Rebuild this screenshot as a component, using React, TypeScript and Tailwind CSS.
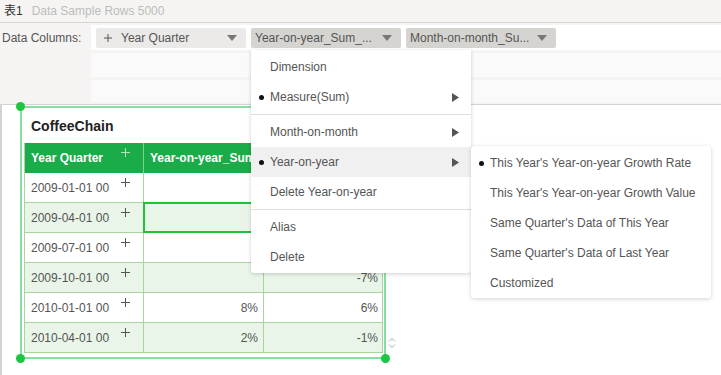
import React from "react";

const FONT = { fontFamily: '"Liberation Sans", Arial, "Noto Sans CJK SC", sans-serif' };

type Row = { date: string; yoy: string; mom: string };

// rows 2-3 of the month-on-month column sit under the open menu
const rows: Row[] = [
    { date: "2009-01-01 00", yoy: "", mom: "" },
    { date: "2009-04-01 00", yoy: "", mom: "" },
    { date: "2009-07-01 00", yoy: "", mom: "" },
    { date: "2009-10-01 00", yoy: "", mom: "-7%" },
    { date: "2010-01-01 00", yoy: "8%", mom: "6%" },
    { date: "2010-04-01 00", yoy: "2%", mom: "-1%" },
];

function Plus({ color = "#555" }: { color?: string }) {
    return (
        <svg width="9" height="9" viewBox="0 0 9 9" fill="none">
            <path d="M4.5 0V9M0 4.5H9" stroke={color} strokeWidth="1" />
        </svg>
    );
}

function Caret() {
    return (
        <svg width="10" height="6" viewBox="0 0 10 6">
            <path d="M0 0H10L5 6Z" fill="#777" />
        </svg>
    );
}

function Arrow() {
    return (
        <svg width="7" height="9" viewBox="0 0 7 9">
            <path d="M0 0L7 4.5L0 9Z" fill="#555" />
        </svg>
    );
}

function Chip({ label, dark, plus }: { label: string; dark?: boolean; plus?: boolean }) {
    return (
        <div
            className={`flex h-[20px] w-[150px] items-center justify-between rounded-[2px] pr-[9px] ${
                dark ? "bg-[#d6d4d0] pl-[4px]" : "bg-[#ebeae8] pl-[8px]"
            }`}
        >
            <div className="flex items-center gap-[9px] text-[#555]">
                {plus && (
                    <svg width="8" height="8" viewBox="0 0 8 8" fill="none">
                        <path d="M4 0V8M0 4H8" stroke="#555" strokeWidth="1" />
                    </svg>
                )}
                <span>{label}</span>
            </div>
            <Caret />
        </div>
    );
}

function MenuItem({ label, bullet, sub, active }: { label: string; bullet?: boolean; sub?: boolean; active?: boolean }) {
    return (
        <div className={`relative flex h-[30px] items-center justify-between pl-[19px] pr-[12px] ${active ? "bg-[#f0f0f0]" : ""}`}>
            {bullet && <span className="absolute left-[8px] top-[13px] h-[5px] w-[5px] rounded-full bg-[#111]" />}
            <span>{label}</span>
            {sub && <Arrow />}
        </div>
    );
}

function Divider() {
    return <div className="my-[2px] h-px bg-[#dedede]" />;
}

export default function App() {
    return (
        <div className="relative h-[375px] w-[721px] overflow-hidden bg-white text-[12px] text-[#555]" style={FONT}>
            {/* sheet bar */}
            <div className="flex h-[23px] items-center gap-[9px] border-b border-[#d6d4d1] bg-[#f5f4f2] pl-[4px]">
                <span className="text-[#333]">表1</span>
                <span className="text-[#bcbcbc]">Data Sample Rows 5000</span>
            </div>

            {/* binding panel */}
            <div className="flex h-[82px] border-b border-[#d6d4d1] bg-[#f5f4f2]">
                <div className="w-[91px] pl-[2px] pt-[2px]">
                    <div className="flex h-[25px] items-center">Data Columns:</div>
                </div>
                <div className="flex flex-1 flex-col pt-[2px]">
                    <div className="flex h-[25px] items-center gap-[5px] bg-white pl-[5px]">
                        <Chip label="Year Quarter" plus />
                        <Chip label="Year-on-year_Sum_..." dark />
                        <Chip label="Month-on-month_Su..." dark />
                    </div>
                    <div className="mt-[3px] h-[24px] bg-[#fafafa]" />
                    <div className="mt-[3px] h-[22px] bg-[#fafafa]" />
                </div>
            </div>

            {/* canvas */}
            <div className="h-[270px] border-l-2 border-[#d4d2ce] pl-[18px] pt-[1px]">
                <div className="relative h-[253px] w-[366px] border-2 border-[#86dfa0]">
                    <span className="absolute -left-[6px] -top-[6px] h-[9px] w-[9px] rounded-full bg-[#1ec542]" />
                    <span className="absolute -bottom-[6px] -left-[6px] h-[9px] w-[9px] rounded-full bg-[#1ec542]" />
                    <span className="absolute -bottom-[6px] -right-[6px] h-[9px] w-[9px] rounded-full bg-[#1ec542]" />

                    <div className="flex h-[35px] items-center pl-[9px] pt-[1px] text-[14px] font-bold text-[#222]">CoffeeChain</div>

                    <div className="ml-[2px] w-[359px] border-l border-[#a9d49f]">
                        <div className="flex h-[30px] bg-[#1aac48] font-bold text-white">
                            <div className="relative flex w-[119px] items-center border-r border-[#7fd08f] pl-[6px]">
                                Year Quarter
                                <span className="absolute left-[96px] top-[5px]">
                                    <Plus color="#b9e2c2" />
                                </span>
                            </div>
                            <div className="flex w-[108px] items-center overflow-hidden whitespace-nowrap pl-[6px]">
                                Year-on-year_Sum
                            </div>
                            <div className="w-[12px] border-r border-[#7fd08f]" />
                            <div className="w-[119px] border-r border-[#7fd08f]" />
                        </div>
                        {rows.map((r, i) => (
                            <div key={r.date} className={`flex h-[30px] ${i % 2 === 1 ? "bg-[#e9f5e8]" : "bg-white"}`}>
                                <div className="relative flex w-[119px] items-center border-b border-r border-[#a9d49f] pl-[6px]">
                                    {r.date}
                                    <span className="absolute left-[96px] top-[5px]">
                                        <Plus />
                                    </span>
                                </div>
                                <div className="relative flex w-[120px] items-center justify-end border-b border-r border-[#a9d49f] pr-[5px]">
                                    {r.yoy}
                                    {i === 1 && <span className="absolute -left-px -top-px h-[31px] w-[121px] border-2 border-[#1fc23a]" />}
                                </div>
                                <div className="flex w-[119px] items-center justify-end border-b border-r border-[#a9d49f] pr-[4px]">
                                    {r.mom}
                                </div>
                            </div>
                        ))}
                    </div>

                    <svg className="absolute -right-[12px] top-[229px]" width="8" height="12" viewBox="0 0 8 12" fill="none">
                        <path d="M1 4.5L4 1.5L7 4.5M1 7.5L4 10.5L7 7.5" stroke="#aaa" strokeWidth="1" />
                    </svg>
                </div>
            </div>

            {/* context menu */}
            <div className="absolute left-[251px] top-[50px] h-[223px] w-[220px] rounded-b-[3px] bg-white pt-[2px] shadow-[0_1px_4px_rgba(0,0,0,0.18)]">
                <MenuItem label="Dimension" />
                <MenuItem label="Measure(Sum)" bullet sub />
                <Divider />
                <MenuItem label="Month-on-month" sub />
                <MenuItem label="Year-on-year" bullet sub active />
                <MenuItem label="Delete Year-on-year" />
                <Divider />
                <MenuItem label="Alias" />
                <MenuItem label="Delete" />
            </div>

            {/* submenu */}
            <div className="absolute left-[471px] top-[146px] h-[152px] w-[240px] rounded-[3px] bg-white pt-[2px] shadow-[0_1px_4px_rgba(0,0,0,0.18)]">
                {[
                    "This Year's Year-on-year Growth Rate",
                    "This Year's Year-on-year Growth Value",
                    "Same Quarter's Data of This Year",
                    "Same Quarter's Data of Last Year",
                    "Customized",
                ].map((label, i) => (
                    <div key={label} className="relative flex h-[30px] items-center pl-[19px]">
                        {i === 0 && <span className="absolute left-[8px] top-[13px] h-[5px] w-[5px] rounded-full bg-[#111]" />}
                        {label}
                    </div>
                ))}
            </div>
        </div>
    );
}
